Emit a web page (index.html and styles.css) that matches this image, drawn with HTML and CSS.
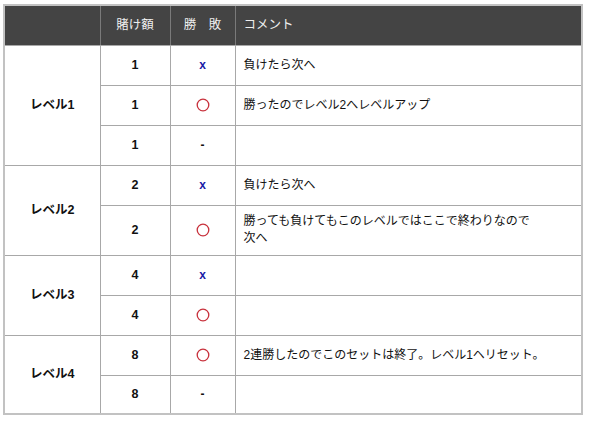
FILE: index.html
```html
<!DOCTYPE html>
<html lang="ja">
<head>
<meta charset="utf-8">
<link rel="stylesheet" href="styles.css">
</head>
<body>
<div class="page">
<table class="tbl">
  <colgroup>
    <col class="c-level">
    <col class="c-bet">
    <col class="c-res">
    <col class="c-com">
  </colgroup>
  <thead>
    <tr class="head">
      <th></th>
      <th class="ctr">賭け額</th>
      <th class="ctr">勝　敗</th>
      <th class="left">コメント</th>
    </tr>
  </thead>
  <tbody>
    <tr class="row">
      <td class="lvl" rowspan="3">レベル1</td>
      <td class="num">1</td>
      <td class="mark"><span class="lose">x</span></td>
      <td class="com">負けたら次へ</td>
    </tr>
    <tr class="row">
      <td class="num">1</td>
      <td class="mark"><svg class="win" width="14" height="14" viewBox="0 0 14 14"><circle cx="7" cy="7" r="5.8" fill="none" stroke="#c8313c" stroke-width="1.3"/></svg></td>
      <td class="com">勝ったのでレベル2へレベルアップ</td>
    </tr>
    <tr class="row">
      <td class="num">1</td>
      <td class="mark"><span class="dash">-</span></td>
      <td class="com"></td>
    </tr>
    <tr class="row">
      <td class="lvl" rowspan="2">レベル2</td>
      <td class="num">2</td>
      <td class="mark"><span class="lose">x</span></td>
      <td class="com">負けたら次へ</td>
    </tr>
    <tr class="row tall">
      <td class="num">2</td>
      <td class="mark"><svg class="win" width="14" height="14" viewBox="0 0 14 14"><circle cx="7" cy="7" r="5.8" fill="none" stroke="#c8313c" stroke-width="1.3"/></svg></td>
      <td class="com">勝っても負けてもこのレベルではここで終わりなので<br>次へ</td>
    </tr>
    <tr class="row">
      <td class="lvl" rowspan="2">レベル3</td>
      <td class="num">4</td>
      <td class="mark"><span class="lose">x</span></td>
      <td class="com"></td>
    </tr>
    <tr class="row">
      <td class="num">4</td>
      <td class="mark"><svg class="win" width="14" height="14" viewBox="0 0 14 14"><circle cx="7" cy="7" r="5.8" fill="none" stroke="#c8313c" stroke-width="1.3"/></svg></td>
      <td class="com"></td>
    </tr>
    <tr class="row">
      <td class="lvl" rowspan="2">レベル4</td>
      <td class="num">8</td>
      <td class="mark"><svg class="win" width="14" height="14" viewBox="0 0 14 14"><circle cx="7" cy="7" r="5.8" fill="none" stroke="#c8313c" stroke-width="1.3"/></svg></td>
      <td class="com">2連勝したのでこのセットは終了。レベル1ヘリセット。</td>
    </tr>
    <tr class="row">
      <td class="num">8</td>
      <td class="mark"><span class="dash">-</span></td>
      <td class="com"></td>
    </tr>
  </tbody>
</table>
</div>
</body>
</html>
```

FILE: styles.css
```css
html, body {
  margin: 0;
  padding: 0;
  background: #ffffff;
}

body {
  font-family: "Liberation Sans", "Noto Sans CJK JP", sans-serif;
  font-size: 12px;
  color: #111;
}

.page {
  padding: 4px 0 0 3px;
}

.tbl {
  width: 580px;
  border-collapse: collapse;
  table-layout: fixed;
  border: 2px solid #c2c2c2;
}

.c-level { width: 96px; }
.c-bet { width: 70px; }
.c-res { width: 65px; }

.tbl th,
.tbl td {
  padding: 0;
  line-height: 17px;
  vertical-align: middle;
}

.tbl td {
  border: 1px solid #a8a8a8;
}

.head {
  height: 40px;
  background: #444444;
}

.head th {
  color: #eeeeee;
  font-weight: normal;
  font-size: 12.5px;
  border-left: 1px solid #7a7a7a;
  border-right: 1px solid #7a7a7a;
  border-bottom: 1px solid #a8a8a8;
}

.head th.ctr {
  text-align: center;
}

.head th.left {
  text-align: left;
  padding-left: 8px;
}

.row {
  height: 40px;
}

.row.tall {
  height: 50px;
}

.row:last-child {
  height: 39px;
}

.lvl {
  text-align: center;
  font-weight: bold;
  font-size: 12.5px;
}

.num {
  text-align: center;
  font-weight: bold;
  font-size: 12.5px;
}

.mark {
  text-align: center;
}

.lose {
  color: #1b1ba6;
  font-weight: bold;
  font-size: 12px;
}

.dash {
  font-weight: bold;
}

.win {
  display: inline-block;
  vertical-align: middle;
}

.com {
  padding-left: 8px !important;
  text-align: left;
}
```
